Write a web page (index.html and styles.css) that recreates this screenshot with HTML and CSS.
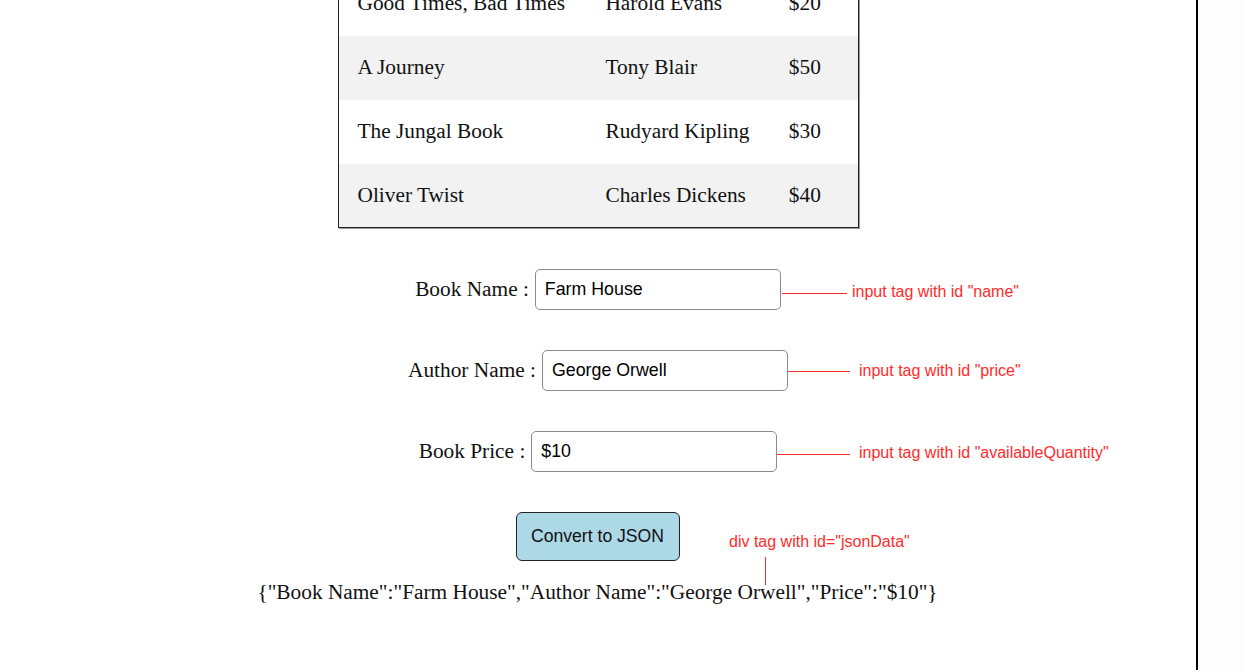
FILE: index.html
```html
<!DOCTYPE html>
<html>
<head>
<meta charset="utf-8">
<link rel="stylesheet" href="styles.css">
</head>
<body>
<div class="page">
  <main class="main">
    <table class="books">
      <colgroup><col class="c1"><col class="c2"><col class="c3"></colgroup>
      <tbody>
        <tr><td>Good Times, Bad Times</td><td>Harold Evans</td><td>$20</td></tr>
        <tr class="alt"><td>A Journey</td><td>Tony Blair</td><td>$50</td></tr>
        <tr><td>The Jungal Book</td><td>Rudyard Kipling</td><td>$30</td></tr>
        <tr class="alt"><td>Oliver Twist</td><td>Charles Dickens</td><td>$40</td></tr>
      </tbody>
    </table>

    <div class="form">
      <div class="row"><label class="label" for="name">Book Name :</label><input class="field" id="name" type="text" value="Farm House"></div>
      <div class="row"><label class="label" for="price">Author Name :</label><input class="field" id="price" type="text" value="George Orwell"></div>
      <div class="row"><label class="label" for="availableQuantity">Book Price :</label><input class="field" id="availableQuantity" type="text" value="$10"></div>
      <div class="btn-row"><button class="btn" type="button">Convert to JSON</button></div>
      <div class="json" id="jsonData">{"Book Name":"Farm House","Author Name":"George Orwell","Price":"$10"}</div>
    </div>

    <div class="note note-name"><span class="hline"></span><span class="ntext">input tag with id "name"</span></div>
    <div class="note note-price"><span class="hline"></span><span class="ntext">input tag with id "price"</span></div>
    <div class="note note-qty"><span class="hline"></span><span class="ntext">input tag with id "availableQuantity"</span></div>
    <div class="note note-div"><span class="ntext">div tag with id="jsonData"</span><span class="vline"></span></div>
  </main>
  <aside class="side"></aside>
</div>
</body>
</html>
```

FILE: styles.css
```css
html, body {
  margin: 0;
  padding: 0;
  background: #ffffff;
}

body {
  overflow: hidden;
  height: 670px;
}

.page {
  display: flex;
  height: 670px;
}

.main {
  position: relative;
  width: 1196px;
  flex: 0 0 auto;
  border-right: 2px solid #000;
  box-sizing: content-box;
  height: 670px;
  font-family: "Liberation Serif", "Times New Roman", serif;
  font-size: 21.33px;
  color: #111;
}

.side {
  flex: 1;
  background: #fdfdfd;
}

.books {
  margin: -29px auto 0;
  width: 521px;
  border-collapse: collapse;
  table-layout: fixed;
  border: 1px solid #222;
  box-shadow: 1px 1px 0 #999;
}

.c1 { width: 247px; }
.c2 { width: 183px; }
.c3 { width: 89px; }

.books td {
  height: 64px;
  padding: 0 0 0 20px;
  box-sizing: border-box;
  white-space: nowrap;
  vertical-align: middle;
}

.books td:first-child {
  padding-left: 19px;
}

.books tr.alt td {
  background: #f2f2f2;
}

.form {
  display: flex;
  flex-direction: column;
  align-items: center;
  padding-top: 41px;
  gap: 40px;
}

.row {
  display: flex;
  align-items: center;
  gap: 6px;
  height: 41px;
}

.label {
  white-space: nowrap;
}

.field {
  width: 246px;
  height: 41px;
  box-sizing: border-box;
  border: 1px solid #8a8a8a;
  border-radius: 5px;
  padding: 0 9px;
  font-family: "Liberation Sans", Arial, sans-serif;
  font-size: 17.8px;
  color: #000;
  background: #fff;
  outline: none;
}

.btn-row {
  display: flex;
  justify-content: center;
  margin-left: -1px;
}

.btn {
  width: 164px;
  height: 49px;
  box-sizing: border-box;
  background: #add8e6;
  border: 1px solid #222;
  border-radius: 6px;
  font-family: "Liberation Sans", Arial, sans-serif;
  font-size: 17.6px;
  color: #111;
  padding: 0;
}

.json {
  margin-top: -21px;
  text-align: center;
  white-space: nowrap;
  line-height: 24px;
  margin-left: -1px;
}

.note {
  position: absolute;
  display: flex;
  align-items: flex-start;
  color: #ff2b2b;
  font-family: "Liberation Sans", Arial, sans-serif;
  font-size: 16px;
  line-height: 18px;
  height: 18px;
  white-space: nowrap;
}

.hline {
  display: block;
  height: 1px;
  background: #ff2b2b;
}

.vline {
  display: block;
  width: 1px;
  height: 28px;
  background: #ff2b2b;
}

.note-name { left: 782px; top: 283px; }
.note-name .hline { width: 65px; margin-right: 5px; margin-top: 10px; }

.note-price { left: 788px; top: 362px; }
.note-price .hline { width: 62px; margin-right: 9px; margin-top: 9px; }

.note-qty { left: 777px; top: 444px; }
.note-qty .hline { width: 73px; margin-right: 9px; margin-top: 10px; }

.note-div {
  left: 729px;
  top: 533px;
  flex-direction: column;
  align-items: flex-start;
  height: auto;
}

.note-div .vline {
  margin-left: 36px;
  margin-top: 6px;
}
```
